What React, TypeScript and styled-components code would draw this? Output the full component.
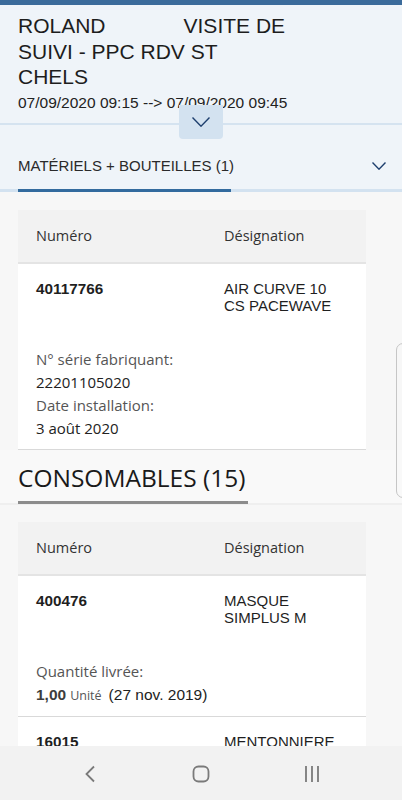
import React from "react";
import styled, { createGlobalStyle } from "styled-components";

const Global = createGlobalStyle`
  html, body { margin: 0; padding: 0; background: #f7f7f7; }
  body { font-family: "Liberation Sans", Arial, sans-serif; }
  * { box-sizing: border-box; }
`;

const Page = styled.div`
  position: relative;
  width: 402px;
  height: 800px;
  overflow: hidden;
  background: #f7f7f7;
  display: flex;
  flex-direction: column;
`;

const Header = styled.header`
  background: #eff4f9;
  border-top: 5px solid #3b6b9b;
  padding: 8px 18px 0;
`;

const Title = styled.h1`
  margin: 0;
  font-family: "Liberation Sans", Arial, sans-serif;
  font-weight: 400;
  font-size: 21px;
  line-height: 25.5px;
  color: #1d1d1d;
  white-space: pre;
`;

const Gap = styled.span`
  display: inline-block;
  width: 78px;
`;

const DateLine = styled.div`
  margin-top: 3px;
  font-family: "Liberation Sans", Arial, sans-serif;
  font-size: 15.5px;
  line-height: 20px;
  color: #222;
  padding-bottom: 10px;
`;

const HeaderDivider = styled.div`
  height: 2px;
  background: #d5e3f0;
  margin: 0 -18px;
  position: relative;
`;

const CollapseBtn = styled.button`
  position: absolute;
  left: 179px;
  top: -18px;
  width: 44px;
  height: 34px;
  border: none;
  border-radius: 0 0 4px 4px;
  background: #d3e2f0;
  display: flex;
  align-items: center;
  justify-content: center;
  padding: 0;
`;

const TabBar = styled.div`
  height: 67px;
  margin: 0 -18px;
  display: flex;
  align-items: flex-end;
  justify-content: space-between;
  padding: 0 16px 0 18px;
  border-bottom: 3px solid #d3e2f0;
`;

const TabLabel = styled.div`
  font-family: "Liberation Sans", Arial, sans-serif;
  font-size: 15px;
  line-height: 20px;
  color: #2a2a2a;
  position: relative;
  width: 213px;
  white-space: nowrap;
  padding-bottom: 13px;
  &::after {
    content: "";
    position: absolute;
    left: 0;
    right: 0;
    bottom: -3px;
    height: 3px;
    background: #336b9e;
  }
`;

const TabChevron = styled.div`
  padding-bottom: 19px;
  display: flex;
`;

const Content = styled.main`
  flex: 1;
  padding: 18px 36px 0 18px;
  display: flex;
  flex-direction: column;
`;

const Table = styled.section<{ $top?: number }>`
  display: flex;
  flex-direction: column;
  margin-top: ${(p) => p.$top ?? 0}px;
`;

const HeadRow = styled.div`
  display: grid;
  grid-template-columns: 188px 1fr;
  height: 54px;
  align-items: center;
  background: #f2f2f2;
  border-bottom: 2px solid #e4e4e4;
  padding: 0 18px;
  font-family: "Open Sans", sans-serif;
  font-size: 14.5px;
  color: #333;
`;

const Row = styled.div`
  background: #fff;
  border-bottom: 1px solid #d9d9d9;
  padding: 16px 18px 9px;
`;

const RowMain = styled.div`
  display: grid;
  grid-template-columns: 188px 1fr;
  font-size: 15px;
  line-height: 17px;
  color: #1f1f1f;
`;

const Num = styled.div`
  font-weight: 700;
  font-size: 15.3px;
`;

const Desig = styled.div`
  font-family: "Liberation Sans", Arial, sans-serif;
`;

const Attrs = styled.div<{ $gap: number }>`
  margin-top: ${(p) => p.$gap}px;
  display: flex;
  flex-direction: column;
`;

const AttrLabel = styled.div`
  font-family: "Open Sans", sans-serif;
  font-size: 15px;
  line-height: 23px;
  color: #555;
`;

const AttrValue = styled.div`
  font-family: "Open Sans", sans-serif;
  font-size: 15px;
  line-height: 23px;
  color: #222;
`;

const Qty = styled.span`
  font-weight: 700;
  color: #3d3d3d;
  font-family: "Liberation Sans", Arial, sans-serif;
  font-size: 15.5px;
`;

const Unit = styled.span`
  font-size: 12.5px;
  color: #555;
  margin: 0 7px 0 4px;
`;

const When = styled.span`
  font-family: "Liberation Sans", Arial, sans-serif;
  font-size: 15.5px;
`;

const SectionTitle = styled.div`
  margin: 0 -36px 0 -18px;
  padding: 11px 0 0 18px;
  border-bottom: 2px solid #efefef;
  background: #f9f9f9;
  height: 55px;
`;

const SectionLabel = styled.div`
  display: inline-block;
  font-family: "Open Sans", sans-serif;
  font-size: 24.5px;
  color: #1a1a1a;
  height: 43px;
  width: 230px;
  border-bottom: 3px solid #8c8c8c;
  line-height: 34px;
`;

const NavBar = styled.nav`
  position: absolute;
  left: 0;
  right: 0;
  bottom: 0;
  height: 54px;
  background: #f2f2f2;
  display: grid;
  grid-template-columns: repeat(3, 111px);
  justify-content: center;
  justify-items: center;
  align-items: center;
  padding-top: 2px;
`;

const EdgeHandle = styled.div`
  position: absolute;
  right: -8px;
  top: 343px;
  width: 14px;
  height: 155px;
  border: 1.5px solid #c6c6c6;
  border-radius: 8px;
`;

const Chevron = ({ w, h, color = "#24416b", sw = 1.3 }: { w: number; h: number; color?: string; sw?: number }) => (
  <svg width={w} height={h} viewBox={`0 0 ${w} ${h}`} fill="none">
    <path d={`M0.5 0.5 L${w / 2} ${h - 0.8} L${w - 0.5} 0.5`} stroke={color} strokeWidth={sw} />
  </svg>
);

export default function App() {
  return (
    <Page>
      <Global />
      <Header>
        <Title>
          ROLAND<Gap />VISITE DE
          <br />
          SUIVI - PPC RDV ST
          <br />
          CHELS
        </Title>
        <DateLine>07/09/2020 09:15 --&gt; 07/09/2020 09:45</DateLine>
        <HeaderDivider>
          <CollapseBtn aria-label="Réduire">
            <Chevron w={18} h={10} color="#1e3f6e" sw={1.4} />
          </CollapseBtn>
        </HeaderDivider>
        <TabBar>
          <TabLabel>MATÉRIELS + BOUTEILLES (1)</TabLabel>
          <TabChevron>
            <Chevron w={14} h={8} color="#1e3f6e" sw={1.4} />
          </TabChevron>
        </TabBar>
      </Header>
      <Content>
        <Table>
          <HeadRow>
            <span>Numéro</span>
            <span>Désignation</span>
          </HeadRow>
          <Row>
            <RowMain>
              <Num>40117766</Num>
              <Desig>AIR CURVE 10<br />CS PACEWAVE</Desig>
            </RowMain>
            <Attrs $gap={34}>
              <AttrLabel>N° série fabriquant:</AttrLabel>
              <AttrValue>22201105020</AttrValue>
              <AttrLabel>Date installation:</AttrLabel>
              <AttrValue>3 août 2020</AttrValue>
            </Attrs>
          </Row>
        </Table>
        <SectionTitle>
          <SectionLabel>CONSOMABLES (15)</SectionLabel>
        </SectionTitle>
        <Table $top={17}>
          <HeadRow>
            <span>Numéro</span>
            <span>Désignation</span>
          </HeadRow>
          <Row>
            <RowMain>
              <Num>400476</Num>
              <Desig>MASQUE<br />SIMPLUS M</Desig>
            </RowMain>
            <Attrs $gap={34}>
              <AttrLabel>Quantité livrée:</AttrLabel>
              <AttrValue>
                <Qty>1,00</Qty>
                <Unit>Unité</Unit>
                <When>(27 nov. 2019)</When>
              </AttrValue>
            </Attrs>
          </Row>
          <Row>
            <RowMain>
              <Num>16015</Num>
              <Desig>MENTONNIERE</Desig>
            </RowMain>
          </Row>
        </Table>
      </Content>
      <EdgeHandle />
      <NavBar>
        <svg width="12" height="18" viewBox="0 0 12 18" fill="none">
          <path d="M10 1.5 L2.5 9 L10 16.5" stroke="#7a7a7a" strokeWidth="1.8" />
        </svg>
        <svg width="18" height="18" viewBox="0 0 18 18" fill="none">
          <rect x="1.5" y="1.5" width="15" height="15" rx="5" stroke="#7a7a7a" strokeWidth="1.8" />
        </svg>
        <svg width="18" height="16" viewBox="0 0 18 16" fill="none">
          <path d="M3 0 V16 M9 0 V16 M15 0 V16" stroke="#7a7a7a" strokeWidth="1.8" />
        </svg>
      </NavBar>
    </Page>
  );
}
